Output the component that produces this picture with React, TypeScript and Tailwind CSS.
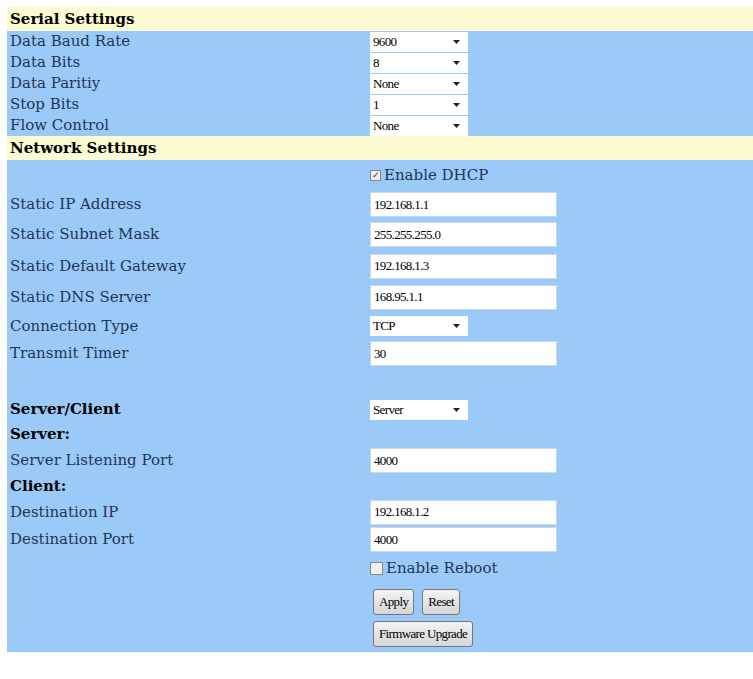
import React from "react";

const Sel = ({ v }: { v: string }) => (
  <div className="w-[98px] h-[20px] bg-white flex items-center justify-between pl-[3px] pr-[8px] text-[13px] text-black tracking-tighter" style={{ fontFamily: '"Liberation Serif", serif' }}>
    <span>{v}</span>
    <svg width="7" height="4" viewBox="0 0 7 4"><path d="M0 0h7L3.5 4z" fill="#222" /></svg>
  </div>
);
const Inp = ({ v }: { v: string }) => (
  <div className="w-[187px] h-[25px] bg-white border border-[#c8d8e8] flex items-center px-[3px] text-[13px] text-black tracking-tighter" style={{ fontFamily: '"Liberation Serif", serif' }}>{v}</div>
);

type R = { l?: string; b?: boolean; h: number; c?: React.ReactNode };

const Row = ({ l, b, h, c }: R) => (
  <div className="flex items-center" style={{ height: h }}>
    <div className={`w-[363px] pl-[3px] text-[15px] ${b ? "font-bold text-black" : "text-[#1d3556]"}`}>{l}</div>
    <div>{c}</div>
  </div>
);

const Head = ({ t }: { t: string }) => (
  <div className="h-[24px] bg-[#fdfbd2] flex items-center pl-[3px] text-[15px] font-bold text-black">{t}</div>
);

const Btn = ({ t, cls = "" }: { t: string; cls?: string }) => (
  <div className={`h-[26px] px-[5px] flex items-center border border-[#777] rounded-[3px] bg-gradient-to-b from-[#f4f4f4] to-[#d6d6d6] text-[13px] text-black tracking-tighter ${cls}`} style={{ fontFamily: '"Liberation Serif", serif' }}>{t}</div>
);

export default function App() {
  return (
    <div className="w-[753px] h-[679px] bg-white pt-[7px] pl-[7px]" style={{ fontFamily: '"DejaVu Serif", serif' }}>
      <div className="bg-[#9ccaf8] w-[746px] pb-[3px]">
        <Head t="Serial Settings" />
        <Row l="Data Baud Rate" h={21} c={<Sel v="9600" />} />
        <Row l="Data Bits" h={21} c={<Sel v="8" />} />
        <Row l="Data Paritiy" h={21} c={<Sel v="None" />} />
        <Row l="Stop Bits" h={21} c={<Sel v="1" />} />
        <Row l="Flow Control" h={21} c={<Sel v="None" />} />
        <Head t="Network Settings" />
        <Row h={30} c={<div className="flex items-center gap-[3px] text-[15px] text-[#1d3556]"><span className="w-[11px] h-[11px] border border-[#888] bg-[#eee] text-[9px] leading-[9px] text-center text-[#333]">✓</span>Enable DHCP</div>} />
        <Row l="Static IP Address" h={29} c={<Inp v="192.168.1.1" />} />
        <Row l="Static Subnet Mask" h={31} c={<Inp v="255.255.255.0" />} />
        <Row l="Static Default Gateway" h={32} c={<Inp v="192.168.1.3" />} />
        <Row l="Static DNS Server" h={30} c={<Inp v="168.95.1.1" />} />
        <Row l="Connection Type" h={28} c={<Sel v="TCP" />} />
        <Row l="Transmit Timer" h={27} c={<Inp v="30" />} />
        <div className="h-[31px]" />
        <Row l="Server/Client" b h={23} c={<Sel v="Server" />} />
        <Row l="Server:" b h={26} />
        <Row l="Server Listening Port" h={27} c={<Inp v="4000" />} />
        <Row l="Client:" b h={24} />
        <Row l="Destination IP" h={28} c={<Inp v="192.168.1.2" />} />
        <Row l="Destination Port" h={27} c={<Inp v="4000" />} />
        <Row h={31} c={<div className="flex items-center gap-[3px] text-[15px] text-[#1d3556]"><span className="w-[13px] h-[13px] border border-[#888] bg-[#eee]" />Enable Reboot</div>} />
        <div className="flex items-center gap-[8px] pl-[366px] h-[35px]"><Btn t="Apply" cls="border-[#5aa7d8]" /><Btn t="Reset" /></div>
        <div className="flex items-center pl-[366px] h-[30px]"><Btn t="Firmware Upgrade" /></div>
      </div>
    </div>
  );
}
